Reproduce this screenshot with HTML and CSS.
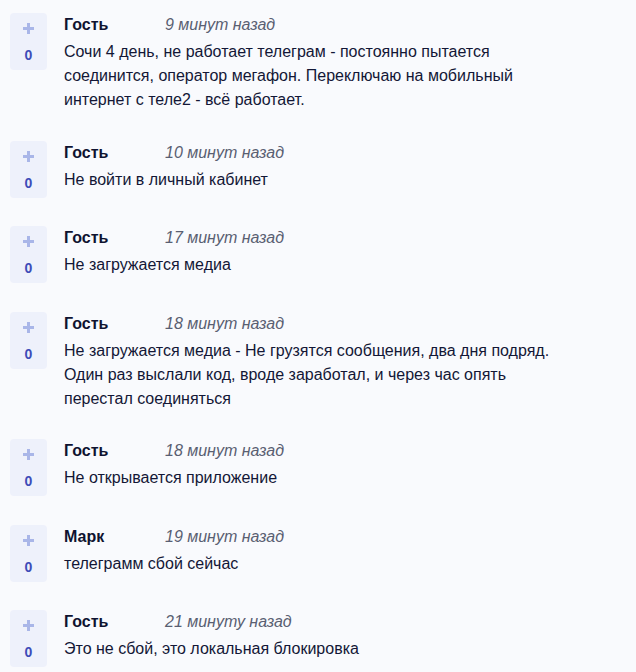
FILE: index.html
```html
<!DOCTYPE html>
<html lang="ru">
<head>
    <meta charset="UTF-8">
    <title>Комментарии</title>
    <link rel="stylesheet" href="styles.css">
</head>
<body>
    <div class="comments">
        <div class="comment">
            <div class="vote">
                <span class="plus"></span>
                <span class="score">0</span>
            </div>
            <div class="body">
                <div class="head"><span class="author">Гость</span><span class="time">9 минут назад</span></div>
                <p class="text">Сочи 4 день, не работает телеграм - постоянно пытается соединится, оператор мегафон. Переключаю на мобильный интернет с теле2 - всё работает.</p>
            </div>
        </div>

        <div class="comment">
            <div class="vote">
                <span class="plus"></span>
                <span class="score">0</span>
            </div>
            <div class="body">
                <div class="head"><span class="author">Гость</span><span class="time">10 минут назад</span></div>
                <p class="text">Не войти в личный кабинет</p>
            </div>
        </div>

        <div class="comment">
            <div class="vote">
                <span class="plus"></span>
                <span class="score">0</span>
            </div>
            <div class="body">
                <div class="head"><span class="author">Гость</span><span class="time">17 минут назад</span></div>
                <p class="text">Не загружается медиа</p>
            </div>
        </div>

        <div class="comment">
            <div class="vote">
                <span class="plus"></span>
                <span class="score">0</span>
            </div>
            <div class="body">
                <div class="head"><span class="author">Гость</span><span class="time">18 минут назад</span></div>
                <p class="text">Не загружается медиа - Не грузятся сообщения, два дня подряд. Один раз выслали код, вроде заработал, и через час опять перестал соединяться</p>
            </div>
        </div>

        <div class="comment">
            <div class="vote">
                <span class="plus"></span>
                <span class="score">0</span>
            </div>
            <div class="body">
                <div class="head"><span class="author">Гость</span><span class="time">18 минут назад</span></div>
                <p class="text">Не открывается приложение</p>
            </div>
        </div>

        <div class="comment">
            <div class="vote">
                <span class="plus"></span>
                <span class="score">0</span>
            </div>
            <div class="body">
                <div class="head"><span class="author">Марк</span><span class="time">19 минут назад</span></div>
                <p class="text">телеграмм сбой сейчас</p>
            </div>
        </div>

        <div class="comment">
            <div class="vote">
                <span class="plus"></span>
                <span class="score">0</span>
            </div>
            <div class="body">
                <div class="head"><span class="author">Гость</span><span class="time">21 минуту назад</span></div>
                <p class="text">Это не сбой, это локальная блокировка</p>
            </div>
        </div>
    </div>
</body>
</html>
```

FILE: styles.css
```css
body, html {
    margin: 0;
    padding: 0;
    background-color: #f9fafd;
    font-family: "Liberation Sans", Arial, sans-serif;
    color: #131736;
}

.comments {
    padding: 13px 66px 0 10px;
    display: flex;
    flex-direction: column;
    gap: 28.5px;
}

.comment {
    display: flex;
    align-items: flex-start;
}

/* Голосование */
.vote {
    width: 37px;
    height: 57px;
    flex-shrink: 0;
    background: #eef1fb;
    border-radius: 4px;
    display: flex;
    flex-direction: column;
    align-items: center;
    margin-right: 17px;
}

.plus {
    position: relative;
    width: 11px;
    height: 11px;
    margin-top: 10px;
}

.plus::before,
.plus::after {
    content: "";
    position: absolute;
    background: #a9b6e8;
}

.plus::before {
    left: 4px;
    top: 0;
    width: 3px;
    height: 11px;
}

.plus::after {
    left: 0;
    top: 4px;
    width: 11px;
    height: 3px;
}

.score {
    margin-top: 13px;
    font-size: 14px;
    font-weight: bold;
    color: #3e4cb8;
    line-height: 16px;
}

/* Текст комментария */
.body {
    flex: 1;
    min-height: 57px;
}

.head {
    display: flex;
    line-height: 23px;
    font-size: 16px;
}

.author {
    width: 101px;
    font-weight: bold;
    color: #0f1330;
}

.time {
    font-style: italic;
    color: #5a5f72;
}

.text {
    margin: 4px 0 0;
    font-size: 16px;
    line-height: 24px;
}
```
